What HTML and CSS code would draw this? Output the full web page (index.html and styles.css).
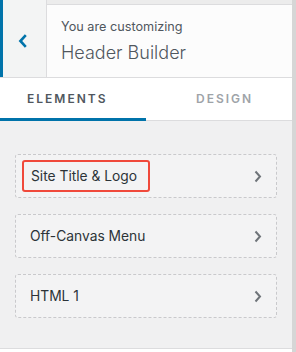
FILE: index.html
```html
<!DOCTYPE html>
<html lang="en">
<head>
  <meta charset="UTF-8" />
  <title>Header Builder</title>
  <link rel="stylesheet" href="styles.css">
</head>
<body>
  <div class="panel">
    <div class="header">
      <button class="back" aria-label="Back">
        <svg width="10" height="14" viewBox="0 0 10 14"><path d="M7.8 1.2 L2.4 7 L7.8 12.8" fill="none" stroke="#0073aa" stroke-width="2.6"/></svg>
      </button>
      <div class="info">
        <span class="action">You are customizing</span>
        <span class="title">Header Builder</span>
      </div>
    </div>

    <div class="tabs">
      <div class="tab active">ELEMENTS</div>
      <div class="tab design">DESIGN</div>
    </div>

    <div class="content">
      <div class="item">
        <span class="label highlight">Site Title &amp; Logo</span>
        <svg class="arrow" width="8" height="13" viewBox="0 0 8 13"><path d="M1.5 1.5 L6 6.5 L1.5 11.5" fill="none" stroke="#6f7479" stroke-width="2"/></svg>
      </div>
      <div class="item">
        <span class="label">Off-Canvas Menu</span>
        <svg class="arrow" width="8" height="13" viewBox="0 0 8 13"><path d="M1.5 1.5 L6 6.5 L1.5 11.5" fill="none" stroke="#6f7479" stroke-width="2"/></svg>
      </div>
      <div class="item">
        <span class="label">HTML 1</span>
        <svg class="arrow" width="8" height="13" viewBox="0 0 8 13"><path d="M1.5 1.5 L6 6.5 L1.5 11.5" fill="none" stroke="#6f7479" stroke-width="2"/></svg>
      </div>
    </div>
  </div>
</body>
</html>
```

FILE: styles.css
```css
body {
  margin: 0;
  background: #d6d6d6;
  font-family: Inter, "Noto Sans", sans-serif;
  color: #2c3338;
}
.panel {
  width: 292px;
  height: 352px;
  background: #fff;
  display: flex;
  flex-direction: column;
}
.header {
  display: flex;
  height: 77px;
  background: #ececec;
  border-bottom: 1px solid #dcdcde;
}
.back {
  width: 47px;
  border: none;
  border-left: 3px solid #0073aa;
  border-right: 1px solid #dcdcde;
  background: #f3f4f4;
  padding: 0;
  display: flex;
  align-items: center;
  justify-content: center;
}
.back svg {
  margin-left: -3px;
  margin-top: 4px;
}
.info {
  flex: 1;
  margin-top: 4px;
  border-top: 1px solid #dcdcde;
  background: #fcfcfc;
  padding: 13px 0 0 14px;
  display: flex;
  flex-direction: column;
  color: #50575e;
}
.action {
  font-size: 12.7px;
  line-height: 18px;
}
.title {
  font-size: 18px;
  font-weight: 300;
  line-height: 34px;
}
.tabs {
  display: flex;
  height: 42px;
  background: #fff;
  border-bottom: 1px solid #dcdcde;
}
.tab {
  display: flex;
  align-items: center;
  box-sizing: border-box;
  font-size: 12px;
  font-weight: 600;
  letter-spacing: 2px;
  color: #50575e;
  border-bottom: 3px solid transparent;
  margin-bottom: -1px;
}
.tab.active {
  width: 146px;
  flex: none;
  padding-left: 27px;
  border-bottom-color: #0073aa;
}
.tab.design {
  flex: 1;
  padding-left: 50px;
  color: #9ea3a8;
}
.content {
  background: #f0f0f1;
  height: 228px;
  border-bottom: 1px solid #dcdcde;
  padding: 33px 15px 0 15px;
  display: flex;
  flex-direction: column;
  gap: 16px;
  box-sizing: border-box;
}
.item {
  height: 44px;
  box-sizing: border-box;
  border: 1px dashed #c9c9cc;
  border-radius: 3px;
  background: #f3f3f4;
  display: flex;
  align-items: center;
  justify-content: space-between;
  padding: 0 14px;
  font-size: 13.8px;
}
.label.highlight {
  margin-left: -8px;
  padding: 6px 11px 6px 7px;
  border: 2px solid #f0493b;
  border-radius: 3px;
}
.arrow {
  flex: none;
}
```
